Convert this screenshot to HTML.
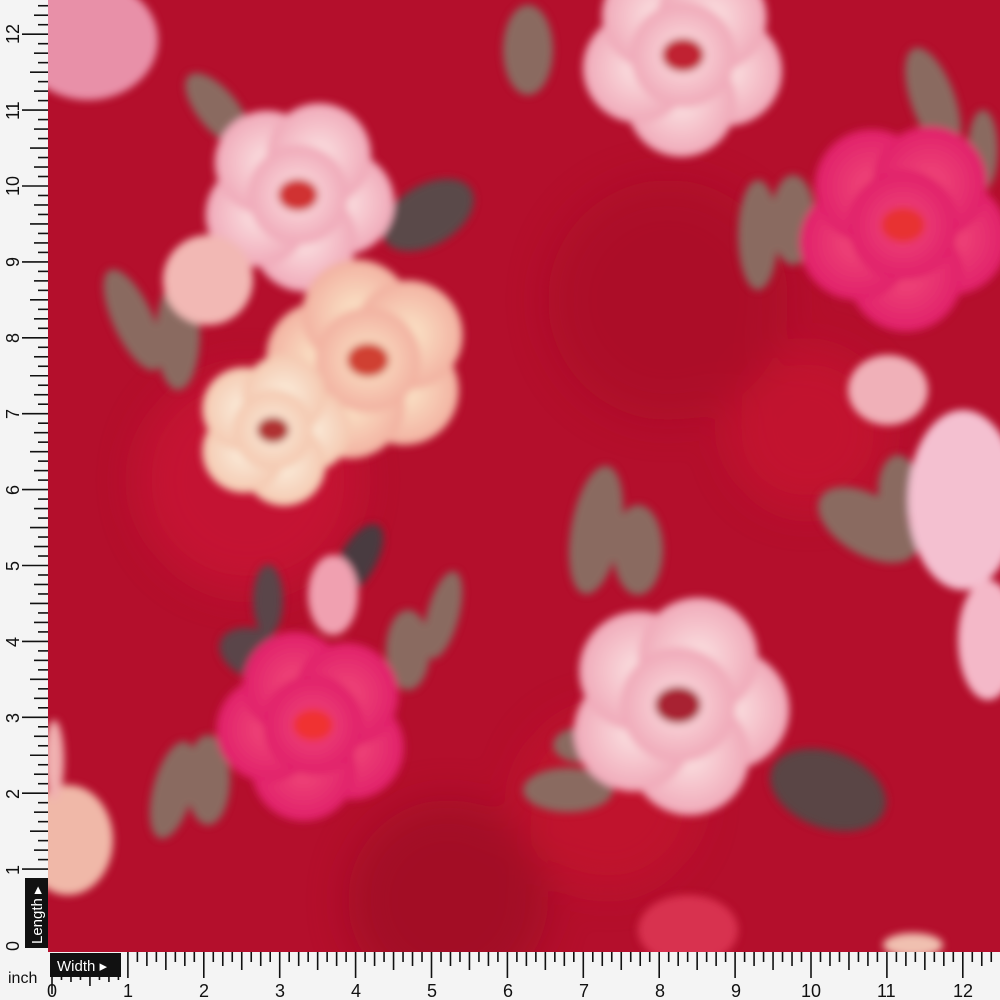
<!DOCTYPE html>
<html><head><style>
body{margin:0;width:1000px;height:1000px;overflow:hidden;background:#fff;font-family:"Liberation Sans",sans-serif}
#f{position:absolute;left:48px;top:0;width:952px;height:952px;background:#b40f2c;overflow:hidden}
</style></head><body>
<div id="f">
<svg width="952" height="952" style="position:absolute;left:0;top:0">
<defs>
<filter id="bl"><feGaussianBlur stdDeviation="4"/></filter>
<filter id="bl2"><feGaussianBlur stdDeviation="20"/></filter>
<radialGradient id="pk"><stop offset="0" stop-color="#fbe2e2"/><stop offset="1" stop-color="#f0a8b8"/></radialGradient>
<radialGradient id="pc"><stop offset="0" stop-color="#fbe6c8"/><stop offset="1" stop-color="#f2b0a0"/></radialGradient>
<radialGradient id="cr"><stop offset="0" stop-color="#fbeedc"/><stop offset="1" stop-color="#f4c8b0"/></radialGradient>
<radialGradient id="hp"><stop offset="0" stop-color="#f04878"/><stop offset="1" stop-color="#e0206a"/></radialGradient>
</defs>
<g filter="url(#bl2)" opacity=".6">
<circle cx="200" cy="480" r="110" fill="#d01838"/>
<circle cx="560" cy="800" r="90" fill="#c8142e"/>
<circle cx="760" cy="430" r="80" fill="#cc1430"/>
<circle cx="620" cy="300" r="120" fill="#a80c28"/>
<circle cx="400" cy="900" r="100" fill="#980a24"/>
</g>
<g filter="url(#bl)">
<g fill="#8a6a60">
<ellipse cx="85" cy="320" rx="20" ry="55" transform="rotate(-25 85 320)"/>
<ellipse cx="130" cy="335" rx="22" ry="55"/>
<ellipse cx="170" cy="110" rx="20" ry="45" transform="rotate(-40 170 110)"/>
<ellipse cx="380" cy="215" rx="50" ry="30" fill="#5a4a48" transform="rotate(-30 380 215)"/>
<ellipse cx="210" cy="655" rx="40" ry="25" fill="#5a4448" transform="rotate(20 210 655)"/>
<ellipse cx="220" cy="600" rx="15" ry="35" fill="#5a4448"/>
<ellipse cx="310" cy="560" rx="18" ry="40" fill="#4a3a40" transform="rotate(30 310 560)"/>
<ellipse cx="360" cy="650" rx="22" ry="40"/>
<ellipse cx="395" cy="615" rx="16" ry="45" transform="rotate(15 395 615)"/>
<ellipse cx="125" cy="790" rx="20" ry="50" transform="rotate(15 125 790)"/>
<ellipse cx="160" cy="780" rx="22" ry="45"/>
<ellipse cx="548" cy="530" rx="25" ry="65" transform="rotate(10 548 530)"/>
<ellipse cx="590" cy="550" rx="25" ry="45"/>
<ellipse cx="520" cy="790" rx="45" ry="22"/>
<ellipse cx="535" cy="745" rx="30" ry="18"/>
<ellipse cx="780" cy="790" rx="60" ry="38" fill="#5a4444" transform="rotate(20 780 790)"/>
<ellipse cx="710" cy="235" rx="20" ry="55"/>
<ellipse cx="745" cy="220" rx="22" ry="45"/>
<ellipse cx="885" cy="100" rx="22" ry="55" transform="rotate(-20 885 100)"/>
<ellipse cx="935" cy="150" rx="15" ry="40"/>
<ellipse cx="820" cy="525" rx="55" ry="30" transform="rotate(30 820 525)"/>
<ellipse cx="850" cy="490" rx="20" ry="35"/>
<ellipse cx="480" cy="50" rx="25" ry="45"/>
</g>
<g id="fl"></g>
<ellipse cx="40" cy="40" rx="70" ry="60" fill="#e890a8"/>
<ellipse cx="840" cy="390" rx="40" ry="35" fill="#f0b0b8"/>
<ellipse cx="915" cy="500" rx="55" ry="90" fill="#f4c0d0"/>
<ellipse cx="940" cy="640" rx="30" ry="60" fill="#f4b8c8"/>
<ellipse cx="285" cy="595" rx="25" ry="40" fill="#f0a0b0"/>
<ellipse cx="20" cy="840" rx="45" ry="55" fill="#f0b8a8"/>
<ellipse cx="6" cy="760" rx="10" ry="40" fill="#f0b0b0"/>
<ellipse cx="640" cy="930" rx="50" ry="35" fill="#d83050"/>
<ellipse cx="865" cy="945" rx="30" ry="12" fill="#f0c0b0"/>
<ellipse cx="160" cy="280" rx="45" ry="45" fill="#f2b8b4"/>
</g>
</svg>
</div>
<svg width="1000" height="1000" style="position:absolute;left:0;top:0" font-family="Liberation Sans, sans-serif">
<rect x="0" y="0" width="48" height="952" fill="#f4f4f4"/>
<rect x="0" y="952" width="1000" height="48" fill="#f4f4f4"/>
<g id="t" stroke="#111" stroke-width="1.6"></g>
<rect x="25" y="878" width="23" height="70" fill="#111"/>
<text transform="translate(42 944) rotate(-90)" fill="#fff" font-size="15">Length ▸</text>
<rect x="50" y="953" width="71" height="24" fill="#111"/>
<text x="57" y="971" fill="#fff" font-size="15">Width ▸</text>
<text x="8" y="983" font-size="16" fill="#111">inch</text>
<g font-size="18" fill="#111">
<text x="47" y="997">0</text><text x="123" y="997">1</text><text x="199" y="997">2</text><text x="275" y="997">3</text><text x="351" y="997">4</text><text x="427" y="997">5</text><text x="503" y="997">6</text><text x="579" y="997">7</text><text x="655" y="997">8</text><text x="731" y="997">9</text><text x="801" y="997">10</text><text x="877" y="997">11</text><text x="953" y="997">12</text>
</g>
<g font-size="18" fill="#111">
<text transform="translate(19 951) rotate(-90)">0</text>
<text transform="translate(19 875) rotate(-90)">1</text>
<text transform="translate(19 799) rotate(-90)">2</text>
<text transform="translate(19 723) rotate(-90)">3</text>
<text transform="translate(19 647) rotate(-90)">4</text>
<text transform="translate(19 571) rotate(-90)">5</text>
<text transform="translate(19 495) rotate(-90)">6</text>
<text transform="translate(19 419) rotate(-90)">7</text>
<text transform="translate(19 343) rotate(-90)">8</text>
<text transform="translate(19 267) rotate(-90)">9</text>
<text transform="translate(19 196) rotate(-90)">10</text>
<text transform="translate(19 120) rotate(-90)">11</text>
<text transform="translate(19 44) rotate(-90)">12</text>
</g>
</svg>
<script>
var g=document.getElementById('t'),s='';
for(var i=0;i<=104;i++){var l=i%8==0?26:i%4==0?18:i%2==0?14:10;
var x=52+i*75.9/8;if(x<1000&&!(x<122)){s+='<line x1="'+x+'" y1="952" x2="'+x+'" y2="'+(952+l)+'"/>';}
else if(x<122&&x>=52){s+='<line x1="'+x+'" y1="976" x2="'+x+'" y2="'+(976+(l>12?l-8:4))+'"/>';}
var y=945-i*75.9/8;if(y>0&&y<878){s+='<line x1="48" y1="'+y+'" x2="'+(48-l)+'" y2="'+y+'"/>';}}
g.innerHTML=s;
var F=[[250,195,100,'url(#pk)','#d03030',10],[320,360,105,'url(#pc)','#d04030',40],[225,430,80,'url(#cr)','#b03030',0],
[635,55,105,'url(#pk)','#c02030',20],[855,225,110,'url(#hp)','#e83030',15],[630,705,115,'url(#pk)','#a82030',5],[265,725,100,'url(#hp)','#f03030',30]];
var h='';F.forEach(function(f){var cx=f[0],cy=f[1],r=f[2];
for(var k=0;k<5;k++){var a=(k*72+f[5])*Math.PI/180;h+='<circle cx="'+(cx+Math.cos(a)*r*.45)+'" cy="'+(cy+Math.sin(a)*r*.45)+'" r="'+(r*.52)+'" fill="'+f[3]+'"/>';}
h+='<circle cx="'+cx+'" cy="'+cy+'" r="'+(r*.5)+'" fill="'+f[3]+'"/><ellipse cx="'+cx+'" cy="'+cy+'" rx="'+(r*.2)+'" ry="'+(r*.16)+'" fill="'+f[4]+'"/>';});
document.getElementById('fl').innerHTML=h;
</script>
</body></html>
